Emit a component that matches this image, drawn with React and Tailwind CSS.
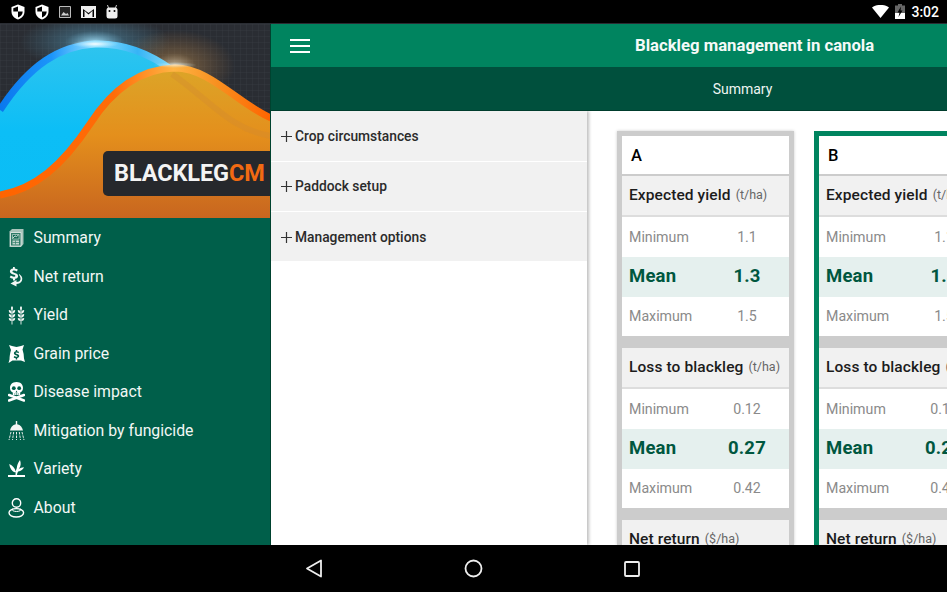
import React from "react";

const Shield = () => (
  <svg width="14" height="16" viewBox="0 0 14 16">
    <path d="M7 .5 13.5 3v4.500c0 3.800-2.700 6.800-6.500 8C3.200 14.300.5 11.300.5 7.500V3z" fill="#fff" />
    <path d="M7 2.500 2.300 4.300V7.500H7zM7 7.500V13.500c2.700-1 4.700-3.300 4.700-6z" fill="#000" />
  </svg>
);

function StatusBar() {
  return (
    <div className="h-[23px] bg-black flex items-center shrink-0 relative">
      <div className="flex items-center ml-[11px] gap-[10px]">
        <Shield />
        <Shield />
        <svg width="12" height="12" viewBox="0 0 12 12">
          <path d="M.5.500h11v11H.5z" fill="#222" stroke="#bbb" />
          <path d="M2 9.500 4.500 6l2.500 2 1.500-1 1.500 2.500z" fill="#ccc" />
        </svg>
        <svg width="15" height="12" viewBox="0 0 15 12">
          <path d="M0 0h15v12H0z" fill="#eee" />
          <path d="M2 11V3l5.500 4L13 3v8h-1.500V4.800L7.500 8.500 3.500 4.800V11z" fill="#000" />
        </svg>
        <svg width="12" height="14" viewBox="0 0 12 14">
          <path d="M2.500 3 1.500 0M9.500 3l1-3" stroke="#ccc" strokeWidth="1" />
          <rect x="0.500" y="2.500" width="11" height="11" rx="2.500" fill="#eee" />
          <circle cx="3.500" cy="6" r="1" fill="#000" />
          <circle cx="8.500" cy="6" r="1" fill="#000" />
        </svg>
      </div>
      <div className="ml-auto flex items-center">
        <svg width="17" height="13" viewBox="0 0 17 13" className="mr-[6px]">
          <path d="M0 2.500C5-1 12-1 17 2.500L8.500 13z" fill="#fff" />
        </svg>
        <svg width="10" height="15" viewBox="0 0 10 15" className="mr-[6px]">
          <path d="M3 0h4v1.500h3V15H0V1.500h3z" fill="#666" />
          <path d="M0 9h10v6H0z" fill="#fff" />
          <path d="M6 2.500 2.500 8.500h2l-1 4.500 4-6.500h-2z" fill="#000" />
        </svg>
        <span className="text-[14px] leading-none text-white font-medium mr-[8px] font-['Roboto',sans-serif]">3:02</span>
      </div>
    </div>
  );
}

function Hero() {
  return (
    <div className="h-[194px] relative overflow-hidden shrink-0 bg-[#2a2d33]">
      <svg width="271" height="194" viewBox="0 0 271 194" className="block">
        <defs>
          <pattern id="grid" width="6" height="6" patternUnits="userSpaceOnUse">
            <path d="M6 0H0V6" fill="none" stroke="#3b4047" strokeWidth="0.600" />
          </pattern>
          <radialGradient id="glow1" cx="0.500" cy="0.500" r="0.500">
            <stop offset="0" stopColor="#a8e6ff" stopOpacity="0.900" />
            <stop offset="0.400" stopColor="#5fb8e0" stopOpacity="0.300" />
            <stop offset="1" stopColor="#5fb8e0" stopOpacity="0" />
          </radialGradient>
          <radialGradient id="glow2" cx="0.500" cy="0.500" r="0.500">
            <stop offset="0" stopColor="#fff0d0" stopOpacity="0.700" />
            <stop offset="0.350" stopColor="#e0a050" stopOpacity="0.300" />
            <stop offset="1" stopColor="#e09040" stopOpacity="0" />
          </radialGradient>
          <radialGradient id="spot1" cx="0.500" cy="0.500" r="0.500">
            <stop offset="0" stopColor="#ffffff" stopOpacity="0.950" />
            <stop offset="1" stopColor="#bff0ff" stopOpacity="0" />
          </radialGradient>
          <linearGradient id="org" x1="0" y1="0" x2="0" y2="1">
            <stop offset="0" stopColor="#dca528" />
            <stop offset="0.450" stopColor="#e48f1c" />
            <stop offset="1" stopColor="#c8661f" />
          </linearGradient>
          <linearGradient id="blu" x1="0" y1="0" x2="0" y2="1">
            <stop offset="0" stopColor="#2fc4ee" />
            <stop offset="0.500" stopColor="#0cbef6" />
            <stop offset="1" stopColor="#0abdf5" />
          </linearGradient>
          <linearGradient id="blueStroke" x1="0" y1="0" x2="1" y2="0">
            <stop offset="0" stopColor="#0a78ee" />
            <stop offset="0.300" stopColor="#1c95fa" />
            <stop offset="0.550" stopColor="#8fe0ff" />
            <stop offset="0.800" stopColor="#36b4f6" />
            <stop offset="1" stopColor="#80d8f5" />
          </linearGradient>
          <linearGradient id="orgStroke" x1="0" y1="0" x2="1" y2="0">
            <stop offset="0" stopColor="#ff6400" />
            <stop offset="0.420" stopColor="#ff6c08" />
            <stop offset="0.640" stopColor="#ffb444" />
            <stop offset="0.800" stopColor="#f89020" />
            <stop offset="1" stopColor="#ff6400" />
          </linearGradient>
        </defs>
        <rect width="271" height="194" fill="url(#grid)" />
        <ellipse cx="95" cy="18" rx="75" ry="28" fill="url(#glow1)" />
        <ellipse cx="175" cy="42" rx="60" ry="36" fill="url(#glow2)" />
        <path d="M0 86C30 40 60 22 95 20C125 19 150 30 172 46C205 70 230 112 271 115V194H0z" fill="url(#blu)" />
        <path d="M0 86C30 40 60 22 95 20C125 19 150 30 172 46" fill="none" stroke="url(#blueStroke)" strokeWidth="7" />
        <ellipse cx="95" cy="20" rx="24" ry="4" fill="url(#spot1)" />
        <path d="M0 171C35 165 62 142 90 100C108 72 135 45 175 44C210 44 238 80 271 94V194H0z" fill="url(#org)" />
        <path d="M172 50C205 72 230 106 271 112" fill="none" stroke="#d08a30" strokeWidth="6" opacity="0.350" />
        <path d="M0 171C35 165 62 142 90 100C108 72 135 45 175 44C210 44 238 80 271 94" fill="none" stroke="url(#orgStroke)" strokeWidth="7" />
        <ellipse cx="175" cy="41" rx="22" ry="3" fill="url(#spot1)" opacity="0.600" />
      </svg>
      <div className="absolute left-[103px] top-[127px] w-[168px] h-[45px] bg-[#26282c] rounded-l-[5px] flex items-center pl-[11px] text-[23.500px] leading-none font-bold font-['Roboto',sans-serif] tracking-[-0.1px]">
        <span className="text-[#f4f4f4]">BLACKLEG</span>
        <span className="text-[#f26a12]">CM</span>
      </div>
    </div>
  );
}

const I = ({ children }) => (
  <svg width="17" height="20" viewBox="0 0 17 20" fill="#f2f6f4" className="shrink-0">{children}</svg>
);

const G = "#005f4a";

const icons = {
  summary: (
    <I>
      <path d="M1.500 3.500 4 1h11.500v15L13 19H1.500z" fill="#a9c4bb" />
      <path d="M2.500 4.500h10.500v13.500H2.500z" fill="#2f7c68" stroke="#dfe9e5" strokeWidth="0.900" />
      <path d="M4.500 6.500h6.500v4.500H4.500z" fill="#0f6852" stroke="#dfe9e5" strokeWidth="0.600" />
      <path d="M5 10l2-2.200 1.500 1 2-2" stroke="#fff" strokeWidth="0.800" fill="none" />
      <path d="M4.500 12.500h6.500v4H4.500z" fill="#c3d6cf" />
      <path d="M4.500 14.500h6.500M7.500 12.500v4" stroke="#2f7c68" strokeWidth="0.700" />
    </I>
  ),
  net: (
    <I>
      <path d="M5 0h1.800v1.600c1.300.1 2.400.6 3 1.200L8.800 4.500C8 3.900 7 3.500 6 3.500c-1 0-1.500.4-1.500 1 0 .7.800 1 2.200 1.400 2 .6 3.400 1.300 3.400 3.100 0 1.500-1.200 2.600-3 2.800V13.500H5v-1.700c-1.300-.2-2.600-.7-3.300-1.500l1.100-1.700c.9.700 1.900 1.200 3 1.200 1 0 1.600-.4 1.600-1 0-.7-.7-1-2.200-1.400-1.900-.5-3.300-1.300-3.300-3.100 0-1.500 1.200-2.600 3.100-2.800z" />
      <path d="M11 7c3 1.500 4 4.500 2.800 7-1 2-3 3-5.300 3L8.500 19.500 2.500 16.500l6-3.500v2c2 0 3.600-.8 4-2.500.3-1.500-.3-3.200-1.500-4.500z" />
    </I>
  ),
  yield: (
    <I>
      <path d="M4 2v17.500M13 2v17.500" stroke="#f2f6f4" strokeWidth="0.900" />
      <path d="M4 1c1.300 1.200 1.300 2.800 0 4.500C2.700 3.800 2.700 2.200 4 1zM13 1c1.300 1.200 1.300 2.800 0 4.500-1.300-1.700-1.300-3.300 0-4.500z" />
      <path d="M.8 5c2.200.3 2.900 1.200 2.900 3.500C1.500 8.200.8 7.200.8 5zM7.200 5C5 5.300 4.300 6.200 4.300 8.500 6.500 8.200 7.200 7.200 7.200 5zM.8 9c2.200.3 2.900 1.200 2.900 3.500C1.500 12.200.8 11.200.8 9zM7.200 9C5 9.300 4.300 10.200 4.300 12.500 6.500 12.200 7.200 11.200 7.200 9zM.8 13c2.200.3 2.900 1 2.900 3C1.500 15.700.8 15 .8 13zM7.200 13C5 13.300 4.300 14 4.300 16 6.500 15.700 7.200 15 7.200 13z" />
      <path d="M9.800 5c2.200.3 2.900 1.200 2.900 3.500C10.500 8.200 9.800 7.200 9.800 5zM16.200 5c-2.200.3-2.900 1.200-2.900 3.500 2.200-.3 2.900-1.300 2.900-3.500zM9.800 9c2.200.3 2.900 1.200 2.900 3.500-2.200-.3-2.900-1.300-2.900-3.500zM16.200 9c-2.200.3-2.900 1.200-2.900 3.500 2.200-.3 2.900-1.300 2.900-3.500zM9.800 13c2.200.3 2.900 1 2.900 3-2.200-.3-2.900-1-2.900-3zM16.200 13c-2.200.3-2.900 1-2.900 3 2.200-.3 2.900-1 2.900-3z" />
    </I>
  ),
  grain: (
    <I>
      <path d="M1 1l3 1 4.500 1L13 2l3-1-1.500 4.500c1 3 1.500 6 1.500 9l1 3.500-4-1.500H4.500L.5 19l1-3.500c0-3 .5-6 1.500-9.500z" fill="#fff" />
      <path d="M7.800 6h1.400v1.200c.8.100 1.400.4 1.900.8l-.7 1.200c-.5-.4-1.100-.7-1.800-.7-.6 0-1 .2-1 .6s.5.600 1.400.9c1.300.4 2.200.9 2.200 2.100 0 1-.7 1.800-2 2V15.500H7.800v-1.300c-.9-.1-1.700-.5-2.200-1l.8-1.200c.6.500 1.300.8 2 .8.700 0 1-.2 1-.6s-.5-.6-1.400-.9C6.800 10.900 5.900 10.400 5.900 9.200c0-1 .7-1.800 1.900-2z" fill={G} />
    </I>
  ),
  skull: (
    <I>
      <path d="M8.500 0C4 0 2 2.800 2 6c0 2 1 3.700 2.800 4.500V13h7.400v-2.500C14 9.700 15 8 15 6c0-3.200-2-6-6.500-6z" fill="#fff" />
      <circle cx="5.800" cy="6.200" r="1.900" fill={G} />
      <circle cx="11.200" cy="6.200" r="1.900" fill={G} />
      <path d="M8.500 8.500 7.500 10.500h2z" fill={G} />
      <path d="M6.800 11v2M8.500 11v2M10.200 11v2" stroke={G} strokeWidth="0.500" />
      <path d="M1 13l15 5.500M16 13 1 18.500" stroke="#fff" strokeWidth="2.400" strokeLinecap="round" />
    </I>
  ),
  mit: (
    <I>
      <path d="M7.800 0h1.400v3.200C12.500 3.800 14.500 6.500 15 9.500H2c.5-3 2.500-5.700 5.800-6.300z" fill="#f2f6f4" />
      <path d="M3 11 1 19M5.700 11 4.500 19M8.500 11v8M11.300 11l1.200 8M14 11l2 8" stroke="#e4ecea" strokeWidth="1" strokeDasharray="2.500 1" />
    </I>
  ),
  variety: (
    <I>
      <path d="M0 16h17v2H0z" fill="#fff" />
      <path d="M7.500 16.500C7.500 14 7.800 11 8.800 9 9 6.500 10 3.500 12 1c1.200 3.300.8 6.300-1 8.800l-.8.800c2-1.500 3.800-2.300 5.800-2.300-.8 2.300-3 3.800-5.800 4.200-.7 1-1.200 2.300-1.200 4zM7.300 13.500C4 12.500 1.800 9.500 1.200 5c3.300 1.500 5.600 4 6.600 7.500z" fill="#fff" />
    </I>
  ),
  about: (
    <I>
      <circle cx="8.500" cy="5" r="4.200" fill="none" stroke="#fff" strokeWidth="1.400" />
      <ellipse cx="8.300" cy="14.800" rx="7.300" ry="4.200" fill="none" stroke="#fff" strokeWidth="1.400" />
      <path d="M5 10.500c-1 .5-1 1.500 0 2.300 2 .9 5 .9 7 0 1-.8 1-1.800 0-2.300" fill="none" stroke="#fff" strokeWidth="1" />
    </I>
  ),
};

const navItems = [
  ["summary", "Summary"],
  ["net", "Net return"],
  ["yield", "Yield"],
  ["grain", "Grain price"],
  ["skull", "Disease impact"],
  ["mit", "Mitigation by fungicide"],
  ["variety", "Variety"],
  ["about", "About"],
];

function Sidebar() {
  return (
    <div className="w-[271px] shrink-0 flex flex-col bg-[#005f4a] border-r border-r-[#00422f]">
      <Hero />
      <div className="flex flex-col pt-[0.750px]">
        {navItems.map(([k, label]) => (
          <div key={k} className="h-[38.500px] flex items-center pl-[8px] gap-[8.500px] text-[15.800px] text-[#f2f7f5]">
            {icons[k]}
            <span>{label}</span>
          </div>
        ))}
      </div>
    </div>
  );
}

function Accordion() {
  return (
    <div className="w-[316px] shrink-0 bg-white shadow-[2px_0_3px_rgba(0,0,0,0.25)] relative z-10">
      {[
        ["Crop circumstances", "h-[51px]", ""],
        ["Paddock setup", "h-[50px]", ""],
        ["Management options", "h-[50px]", "pt-[1px]"],
      ].map(([t, h, p]) => (
        <div key={t} className={`${h} ${p} bg-[#f1f1f1] border-b border-b-white flex items-center pl-[10px] gap-[3px] text-[13.800px] font-medium text-[#2b2b2b]`}>
          <svg width="11" height="11" viewBox="0 0 11 11">
            <path d="M5.500 0v11M0 5.500h11" stroke="#333" strokeWidth="1.200" />
          </svg>
          <span>{t}</span>
        </div>
      ))}
    </div>
  );
}

function Row({ label, value, h }) {
  return (
    <div className={`${h} flex items-center bg-white pl-[7px] text-[14.200px] text-[#8a8a8a]`}>
      <span className="w-[93px]">{label}</span>
      <span className="w-[50px] text-center">{value}</span>
    </div>
  );
}

function Mean({ value }) {
  return (
    <div className="h-[39.500px] flex items-center bg-[#e5f0ee] pl-[7px] text-[18.500px] font-bold text-[#00573f] tracking-[0.2px]">
      <span className="w-[93px]">Mean</span>
      <span className="w-[50px] text-center whitespace-nowrap">{value}</span>
    </div>
  );
}

function Section({ title, unit, min, mean, max }) {
  return (
    <div>
      <div className="h-[41px] bg-[#f1f1f1] border-b-2 border-b-[#dddddd] flex items-center pl-[7px] whitespace-nowrap overflow-hidden">
        <span className="text-[15.500px] font-medium text-[#1c1c1c] tracking-[0.1px]">{title}</span>
        <span className="text-[12.500px] text-[#666] ml-[5px]">{unit}</span>
      </div>
      {min && (
        <>
          <Row label="Minimum" value={min} h="h-[40px] pt-[1px]" />
          <Mean value={mean} />
          <Row label="Maximum" value={max} h="h-[39.500px]" />
        </>
      )}
    </div>
  );
}

function Card({ name, border }) {
  return (
    <div className={`w-[177px] shrink-0 border-[5px] border-b-0 ${border} flex flex-col gap-[12px] bg-[#cccccc]`}>
      <div>
        <div className="h-[40px] bg-white border-b-2 border-b-[#cccccc] flex items-center pl-[9px] pt-[3px] text-[16.500px] font-medium text-black">{name}</div>
        <Section title="Expected yield" unit="(t/ha)" min="1.1" mean="1.3" max="1.5" />
      </div>
      <Section title="Loss to blackleg" unit="(t/ha)" min="0.12" mean="0.27" max="0.42" />
      <Section title="Net return" unit="($/ha)" />
    </div>
  );
}

function Main() {
  return (
    <div className="flex-1 min-w-0 flex flex-col">
      <div className="h-[43px] bg-[#00845f] flex items-center relative shrink-0">
        <svg width="20" height="14" viewBox="0 0 20 14" className="ml-[19px]">
          <path d="M0 1h20M0 7h20M0 13h20" stroke="#fff" strokeWidth="2" />
        </svg>
        <span className="absolute left-[364px] text-[16.700px] font-bold text-[#f5faf8] whitespace-nowrap">Blackleg management in canola</span>
      </div>
      <div className="h-[44px] bg-[#00503d] flex items-center justify-center shrink-0 border-b border-b-[#003d2d] pl-[269px] pr-[2px] pt-[1px]">
        <span className="text-[14px] text-[#eef5f2]">Summary</span>
      </div>
      <div className="flex flex-1 min-h-0 overflow-hidden bg-white">
        <Accordion />
        <div className="flex-1 min-w-0 flex gap-[20px] pl-[30px] pt-[20px] overflow-hidden">
          <Card name="A" border="border-[#cccccc] shadow-[0_0_3px_rgba(0,0,0,0.2)]" />
          <Card name="B" border="border-[#00845f]" />
        </div>
      </div>
    </div>
  );
}

function NavBar() {
  return (
    <div className="h-[47px] bg-black shrink-0 flex items-center pl-[305px] gap-[141px]">
      <svg width="18" height="19" viewBox="0 0 18 19"><path d="M16 1.500v16L2 9.500z" fill="none" stroke="#eee" strokeWidth="1.800" strokeLinejoin="round" /></svg>
      <svg width="19" height="19" viewBox="0 0 19 19"><circle cx="9.500" cy="9.500" r="8" fill="none" stroke="#eee" strokeWidth="1.800" /></svg>
      <svg width="16" height="16" viewBox="0 0 16 16"><rect x="1" y="1" width="14" height="14" rx="1" fill="none" stroke="#eee" strokeWidth="1.800" /></svg>
    </div>
  );
}

export default function App() {
  return (
    <div className="w-[947px] h-[592px] flex flex-col overflow-hidden font-['Roboto',sans-serif] bg-black">
      <StatusBar />
      <div className="h-[1px] bg-[#2a2d33] shrink-0" />
      <div className="flex-1 min-h-0 flex overflow-hidden">
        <Sidebar />
        <Main />
      </div>
      <NavBar />
    </div>
  );
}
